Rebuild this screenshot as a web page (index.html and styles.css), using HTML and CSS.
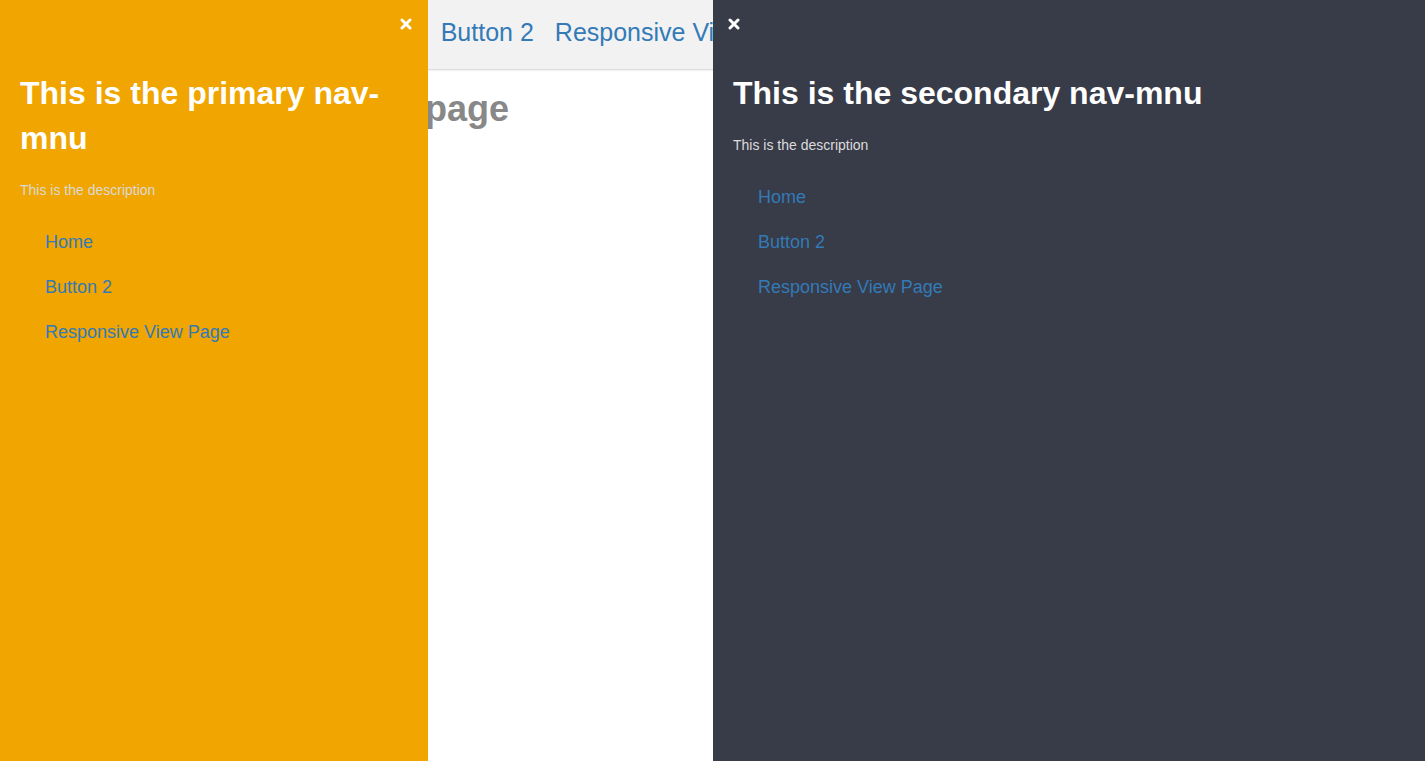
FILE: index.html
```html
<!DOCTYPE html>
<html>
<head>
<meta charset="utf-8">
<title>Nav menus</title>
<link rel="stylesheet" href="styles.css">
</head>
<body>
<div class="page">
  <header class="topbar">
    <nav class="topnav">
      <a href="#">Home</a>
      <a href="#">Button 2</a>
      <a href="#">Responsive View Page</a>
    </nav>
  </header>
  <main class="content">
    <h1 class="page-title">This is the home page</h1>
  </main>
</div>

<aside class="panel panel-primary">
  <button class="close close-right" aria-label="Close">
    <svg viewBox="0 0 12 12" width="12" height="12"><path d="M2 2 L10 10 M10 2 L2 10" stroke="#fff" stroke-width="3" stroke-linecap="round"/></svg>
  </button>
  <h2 class="panel-title">This is the primary nav-mnu</h2>
  <p class="panel-desc">This is the description</p>
  <ul class="panel-links">
    <li><a href="#">Home</a></li>
    <li><a href="#">Button 2</a></li>
    <li><a href="#">Responsive View Page</a></li>
  </ul>
</aside>

<aside class="panel panel-secondary">
  <button class="close close-left" aria-label="Close">
    <svg viewBox="0 0 12 12" width="12" height="12"><path d="M2 2 L10 10 M10 2 L2 10" stroke="#fff" stroke-width="3" stroke-linecap="round"/></svg>
  </button>
  <h2 class="panel-title">This is the secondary nav-mnu</h2>
  <p class="panel-desc">This is the description</p>
  <ul class="panel-links">
    <li><a href="#">Home</a></li>
    <li><a href="#">Button 2</a></li>
    <li><a href="#">Responsive View Page</a></li>
  </ul>
</aside>
</body>
</html>
```

FILE: styles.css
```css
html, body {
  margin: 0;
  padding: 0;
  height: 100%;
}
body {
  font-family: "Liberation Sans", Arial, Helvetica, sans-serif;
  background: #fff;
  overflow: hidden;
}
a {
  color: #337ab7;
  text-decoration: none;
}
.topbar {
  height: 69px;
  background: #f2f2f2;
  border-bottom: 1px solid #dcdcdc;
  box-shadow: 0 1px 2px rgba(0,0,0,0.06);
  display: flex;
  align-items: center;
}
.topnav {
  display: flex;
  gap: 21px;
  padding-left: 353px;
  font-size: 25px;
  margin-top: -4px;
}
.content {
  padding-left: 131px;
}
.page-title {
  margin: 18px 0 0;
  font-size: 36px;
  font-weight: bold;
  color: #888;
}
.panel {
  position: fixed;
  top: 0;
  bottom: 0;
  box-sizing: border-box;
  padding: 71px 20px 0;
}
.panel-primary {
  left: 0;
  width: 428px;
  background: #f0a500;
}
.panel-secondary {
  left: 713px;
  right: 0;
  background: #383b48;
}
.close {
  position: absolute;
  top: 18px;
  background: none;
  border: 0;
  padding: 0;
  width: 12px;
  height: 12px;
  cursor: pointer;
  display: block;
}
.close svg { display: block; }
.close-right { right: 16px; }
.close-left { left: 15px; }
.panel-title {
  margin: 0;
  font-size: 32px;
  line-height: 45px;
  font-weight: bold;
  color: #fff;
}
.panel-desc {
  margin: 19px 0 0;
  font-size: 14px;
  line-height: 20px;
}
.panel-primary .panel-desc { color: #d9d9d9; }
.panel-secondary .panel-desc { color: #dcdcdc; }
.panel-links {
  list-style: none;
  margin: 30px 0 0;
  padding: 0 0 0 25px;
  display: flex;
  flex-direction: column;
  gap: 20px;
}
.panel-links a {
  font-size: 18px;
  line-height: 25px;
  display: block;
}
```
